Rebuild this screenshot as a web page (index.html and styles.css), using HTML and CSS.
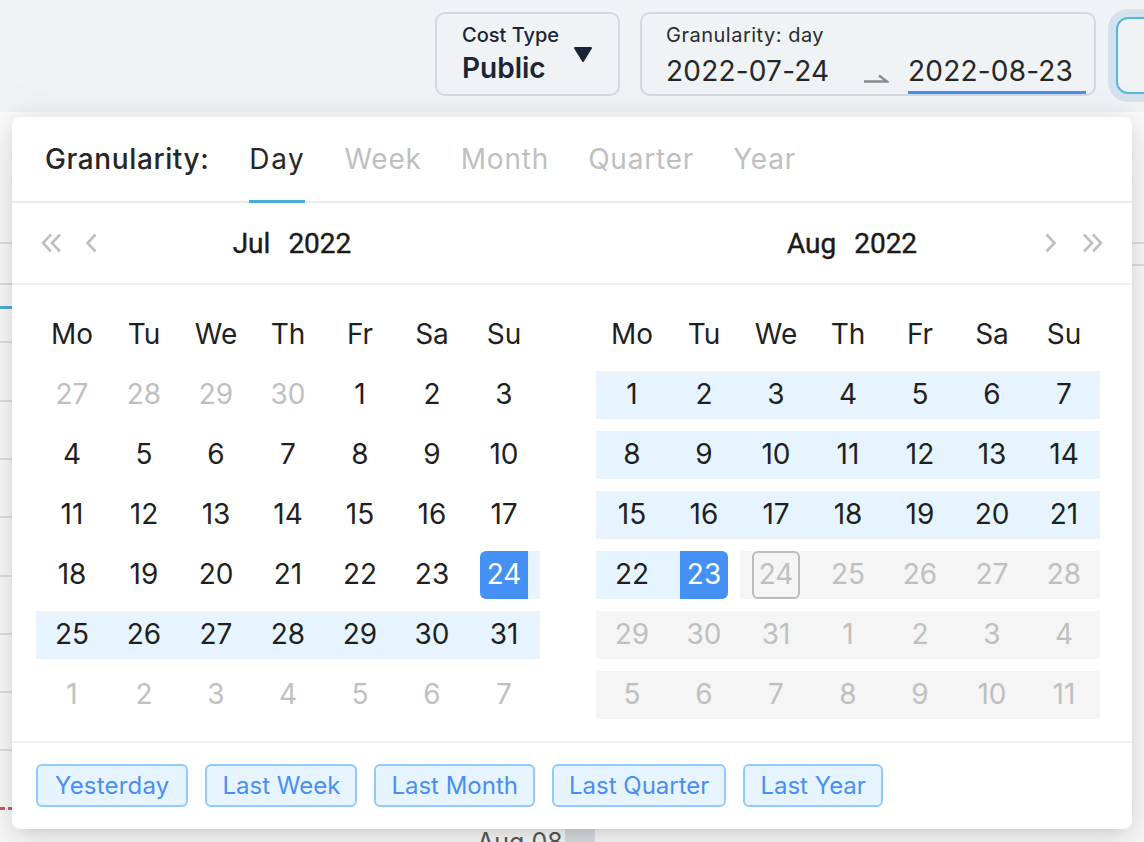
FILE: index.html
```html
<!DOCTYPE html>
<html lang="en">
<head>
<meta charset="utf-8">
<title>Cost date range picker</title>
<link rel="stylesheet" href="styles.css">
</head>
<body>
<div class="chart">
  <div class="gl" style="top:130px"></div>
  <div class="gl" style="top:171px"></div>
  <div class="gl" style="top:229px"></div>
  <div class="gl" style="top:288px"></div>
  <div class="gl" style="top:346px"></div>
  <div class="gl" style="top:404px"></div>
  <div class="gl" style="top:463px"></div>
  <div class="gl" style="top:521px"></div>
  <div class="gl" style="top:579px"></div>
  <div class="gl" style="top:637px"></div>
  <div class="teal" style="top:194px"></div>
  <div class="reddash" style="top:695px"></div>
  <div class="gl right" style="top:130px"></div>
  <div class="gl right" style="top:152px"></div>
  <div class="axis-label">Aug 08</div>
  <div class="axis-box"></div>
</div>

<header class="toolbar">
  <div class="select-box">
    <div class="sel-text">
      <div class="sel-label">Cost Type</div>
      <div class="sel-value">Public</div>
    </div>
    <svg class="caret" width="20" height="17" viewBox="0 0 20 17"><path d="M2 2 H18 L10 15 Z" fill="#1c2437" stroke="#1c2437" stroke-width="2" stroke-linejoin="round"/></svg>
  </div>
  <div class="range-box">
    <div class="range-label">Granularity: day</div>
    <div class="range-inputs">
      <div class="r-input">2022-07-24</div>
      <div class="r-sep">
        <svg width="26" height="9" viewBox="0 0 26 9"><path d="M1 7.5 H24 L16 1.5" fill="none" stroke="#8c8c8c" stroke-width="2.4" stroke-linejoin="miter"/></svg>
      </div>
      <div class="r-input active">2022-08-23</div>
    </div>
  </div>
  <div class="focus-btn"></div>
</header>

<div class="popup">
  <div class="gran-bar">
    <span class="gran-title">Granularity:</span>
    <div class="tabs">
      <span class="tab on">Day</span>
      <span class="tab">Week</span>
      <span class="tab">Month</span>
      <span class="tab">Quarter</span>
      <span class="tab">Year</span>
    </div>
  </div>

  <div class="panels">
    <div class="panel">
      <div class="panel-head">
        <div class="navs">
          <svg class="dbl" width="24" height="20" viewBox="0 0 24 20"><polyline points="11,1.5 3,10 11,18.5" /><polyline points="20,1.5 12,10 20,18.5" /></svg>
          <svg class="sgl" width="12" height="20" viewBox="0 0 12 20"><polyline points="10.5,1.5 2.5,10 10.5,18.5" /></svg>
        </div>
        <div class="ptitle"><span>Jul</span><span>2022</span></div>
        <div class="navs end"></div>
      </div>
      <div class="panel-body">
        <div class="grid">
          <div class="wd">Mo</div><div class="wd">Tu</div><div class="wd">We</div><div class="wd">Th</div><div class="wd">Fr</div><div class="wd">Sa</div><div class="wd">Su</div>

          <div class="c m"><span>27</span></div><div class="c m"><span>28</span></div><div class="c m"><span>29</span></div><div class="c m"><span>30</span></div><div class="c"><span>1</span></div><div class="c"><span>2</span></div><div class="c"><span>3</span></div>

          <div class="c"><span>4</span></div><div class="c"><span>5</span></div><div class="c"><span>6</span></div><div class="c"><span>7</span></div><div class="c"><span>8</span></div><div class="c"><span>9</span></div><div class="c"><span>10</span></div>

          <div class="c"><span>11</span></div><div class="c"><span>12</span></div><div class="c"><span>13</span></div><div class="c"><span>14</span></div><div class="c"><span>15</span></div><div class="c"><span>16</span></div><div class="c"><span>17</span></div>

          <div class="c"><span>18</span></div><div class="c"><span>19</span></div><div class="c"><span>20</span></div><div class="c"><span>21</span></div><div class="c"><span>22</span></div><div class="c"><span>23</span></div><div class="c s"><span>24</span></div>

          <div class="c r"><span>25</span></div><div class="c r"><span>26</span></div><div class="c r"><span>27</span></div><div class="c r"><span>28</span></div><div class="c r"><span>29</span></div><div class="c r"><span>30</span></div><div class="c r"><span>31</span></div>

          <div class="c m"><span>1</span></div><div class="c m"><span>2</span></div><div class="c m"><span>3</span></div><div class="c m"><span>4</span></div><div class="c m"><span>5</span></div><div class="c m"><span>6</span></div><div class="c m"><span>7</span></div>
        </div>
      </div>
    </div>

    <div class="panel">
      <div class="panel-head">
        <div class="navs"></div>
        <div class="ptitle"><span>Aug</span><span>2022</span></div>
        <div class="navs end">
          <svg class="sgl" width="12" height="20" viewBox="0 0 12 20"><polyline points="1.5,1.5 9.5,10 1.5,18.5" /></svg>
          <svg class="dbl" width="24" height="20" viewBox="0 0 24 20"><polyline points="4,1.5 12,10 4,18.5" /><polyline points="13,1.5 21,10 13,18.5" /></svg>
        </div>
      </div>
      <div class="panel-body">
        <div class="grid">
          <div class="wd">Mo</div><div class="wd">Tu</div><div class="wd">We</div><div class="wd">Th</div><div class="wd">Fr</div><div class="wd">Sa</div><div class="wd">Su</div>

          <div class="c r"><span>1</span></div><div class="c r"><span>2</span></div><div class="c r"><span>3</span></div><div class="c r"><span>4</span></div><div class="c r"><span>5</span></div><div class="c r"><span>6</span></div><div class="c r"><span>7</span></div>

          <div class="c r"><span>8</span></div><div class="c r"><span>9</span></div><div class="c r"><span>10</span></div><div class="c r"><span>11</span></div><div class="c r"><span>12</span></div><div class="c r"><span>13</span></div><div class="c r"><span>14</span></div>

          <div class="c r"><span>15</span></div><div class="c r"><span>16</span></div><div class="c r"><span>17</span></div><div class="c r"><span>18</span></div><div class="c r"><span>19</span></div><div class="c r"><span>20</span></div><div class="c r"><span>21</span></div>

          <div class="c r"><span>22</span></div><div class="c e"><span>23</span></div><div class="c d t"><span>24</span></div><div class="c d"><span>25</span></div><div class="c d"><span>26</span></div><div class="c d"><span>27</span></div><div class="c d"><span>28</span></div>

          <div class="c d"><span>29</span></div><div class="c d"><span>30</span></div><div class="c d"><span>31</span></div><div class="c d"><span>1</span></div><div class="c d"><span>2</span></div><div class="c d"><span>3</span></div><div class="c d"><span>4</span></div>

          <div class="c d"><span>5</span></div><div class="c d"><span>6</span></div><div class="c d"><span>7</span></div><div class="c d"><span>8</span></div><div class="c d"><span>9</span></div><div class="c d"><span>10</span></div><div class="c d"><span>11</span></div>
        </div>
      </div>
    </div>
  </div>

  <div class="footer">
    <span class="preset">Yesterday</span>
    <span class="preset">Last Week</span>
    <span class="preset">Last Month</span>
    <span class="preset">Last Quarter</span>
    <span class="preset">Last Year</span>
  </div>
</div>
</body>
</html>
```

FILE: styles.css
```css
* { box-sizing: border-box; }
html, body { margin: 0; padding: 0; }
body {
  width: 1144px;
  height: 842px;
  overflow: hidden;
  position: relative;
  background: #eff3f6;
  font-family: Inter, "Liberation Sans", sans-serif;
  color: #1f1f1f;
}

/* background chart (mostly hidden by the popup) */
.chart {
  position: absolute;
  left: 0; right: 0; top: 112px; bottom: 0;
  background: #fbfbfb;
}
.gl {
  position: absolute;
  left: 0; width: 20px;
  height: 2px;
  background: #e0e0e0;
}
.gl.right { left: auto; right: 0; }
.teal {
  position: absolute;
  left: 0; width: 20px; height: 3px;
  background: #4aaed4;
}
.reddash {
  position: absolute;
  left: 0; width: 20px; height: 3px;
  background: repeating-linear-gradient(90deg, #d45a5a 0 5px, transparent 5px 8px);
}
.axis-label {
  position: absolute;
  left: 477px; top: 714px;
  font-size: 25px; line-height: 32px;
  color: #595959;
}
.axis-box {
  position: absolute;
  left: 565px; top: 700px;
  width: 30px; height: 40px;
  background: #dcdfe3;
}

/* toolbar */
.toolbar {
  display: flex;
  align-items: flex-start;
  gap: 20px;
  padding: 12px 0 0 435px;
  height: 112px;
}
.select-box {
  flex-shrink: 0;
  width: 185px;
  height: 84px;
  border: 2px solid #d4d8de;
  border-radius: 10px;
  display: flex;
  align-items: center;
  justify-content: space-between;
  padding: 0 25px 0 25px;
}
.sel-text { display: flex; flex-direction: column; gap: 4px; }
.sel-label { font-size: 20px; line-height: 24px; font-weight: 500; color: #1c2437; }
.sel-value { font-size: 28px; line-height: 34px; font-weight: 600; color: #1c2437; }
.caret { display: block; margin-top: 0; }

.range-box {
  flex-shrink: 0;
  width: 456px;
  height: 84px;
  border: 2px solid #d4d8de;
  border-radius: 10px;
  padding: 9px 8px 0 24px;
  display: flex;
  flex-direction: column;
  gap: 7px;
}
.range-label { font-size: 20px; line-height: 24px; color: #2b2b2b; letter-spacing: 0.5px; }
.range-inputs { display: flex; height: 40px; }
.r-input {
  width: 178px;
  font-size: 28px;
  line-height: 34px;
  color: #262626;
  letter-spacing: 0.2px;
  padding-bottom: 3px;
  border-bottom: 3px solid transparent;
}
.r-input.active { border-bottom-color: #4490f5; }
.r-sep { width: 64px; display: flex; justify-content: center; padding-top: 20px; }
.r-sep svg { display: block; }

.focus-btn {
  flex-shrink: 0;
  margin-top: 5px;
  width: 120px;
  height: 77px;
  border: 2px solid #5bb5d9;
  border-radius: 12px;
  box-shadow: 0 0 0 8px rgba(110, 175, 210, 0.22);
}

/* popup */
.popup {
  position: absolute;
  left: 12px; top: 117px;
  width: 1120px; height: 712px;
  background: #ffffff;
  border-radius: 8px;
  box-shadow: 0 12px 32px 0 rgba(0,0,0,0.08), 0 6px 12px -8px rgba(0,0,0,0.12), 0 18px 56px 16px rgba(0,0,0,0.05), 0 -4px 18px 0 rgba(0,0,0,0.04);
  display: flex;
  flex-direction: column;
}
.gran-bar {
  height: 86px;
  border-bottom: 2px solid #e9ebee;
  display: flex;
  align-items: stretch;
  padding-left: 33px;
}
.gran-title {
  align-self: center;
  font-size: 28px;
  font-weight: 500;
  letter-spacing: 0.6px;
  color: #262626;
}
.tabs { display: flex; gap: 39px; margin-left: 40px; }
.tab {
  position: relative;
  display: flex;
  align-items: center;
  font-size: 28px;
  letter-spacing: 0.8px;
  color: #bfbfbf;
}
.tab.on { color: #262626; letter-spacing: 1.6px; }
.tab.on::after {
  content: "";
  position: absolute;
  left: 0; right: 0; bottom: -2px;
  height: 3px;
  background: #4aaed4;
}

.panels { display: flex; }
.panel { width: 560px; }
.panel-head {
  height: 82px;
  border-bottom: 2px solid #f0f0f0;
  display: grid;
  grid-template-columns: 1fr auto 1fr;
  align-items: center;
  padding: 0 28px;
}
.navs { display: flex; align-items: center; gap: 21px; }
.navs.end { justify-content: flex-end; gap: 23px; }
.navs svg { display: block; fill: none; stroke: #bfbfbf; stroke-width: 2.6; }
.ptitle {
  display: flex;
  gap: 18px;
  font-family: Roboto, "Liberation Sans", sans-serif;
  font-weight: 400;
  font-size: 28px;
  color: #1a1a1a;
  -webkit-text-stroke: 0.4px #1a1a1a;
}

.panel-body { padding: 26px 32px 22px 24px; }
.grid {
  display: grid;
  grid-template-columns: repeat(7, 72px);
  grid-auto-rows: 48px;
  row-gap: 12px;
}
.wd, .c {
  display: flex;
  align-items: center;
  justify-content: center;
  font-size: 28px;
  color: #1f1f1f;
}
.wd { padding-bottom: 3px; }
.c span {
  width: 48px; height: 48px;
  display: flex;
  align-items: center;
  justify-content: center;
  border-radius: 6px;
  padding-bottom: 2px;
}
.c.m { color: #bfbfbf; }
.c.r { background: #e6f4ff; }
.c.s { background: linear-gradient(90deg, transparent 50%, #e6f4ff 50%); }
.c.e { background: linear-gradient(90deg, #e6f4ff 50%, transparent 50%); }
.c.s span { background: #4490f5; color: #ffffff; border-radius: 6px 0 0 6px; }
.c.e span { background: #4490f5; color: #ffffff; border-radius: 0 6px 6px 0; }
.c.d { background: #f5f5f5; color: #bfbfbf; }
.c.t span { border: 2px solid #bcbcbc; }

.footer {
  border-top: 2px solid #f0f0f0;
  padding: 21px 24px 0;
  display: flex;
  gap: 17px;
}
.preset {
  height: 43px;
  padding: 0 15px;
  border: 2px solid #91caff;
  background: #e6f4ff;
  color: #4a8ef2;
  border-radius: 6px;
  font-size: 24px;
  letter-spacing: 0;
  display: flex;
  align-items: center;
}
.preset:first-child { padding: 0 17px; letter-spacing: 0.2px; }
```
